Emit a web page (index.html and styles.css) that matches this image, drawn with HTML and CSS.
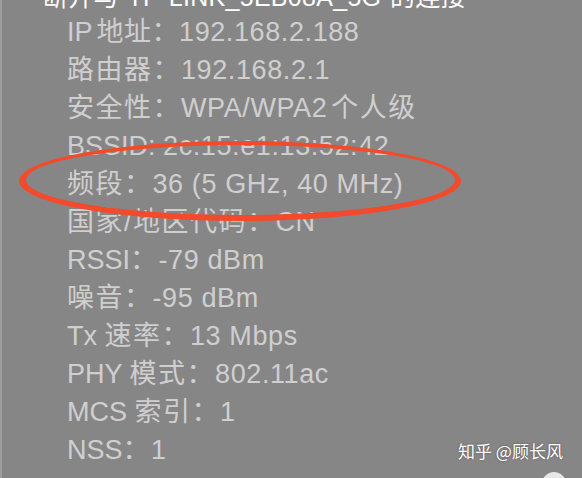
FILE: index.html
```html
<!DOCTYPE html>
<html lang="zh-CN">
<head>
  <meta charset="UTF-8" />
  <meta name="viewport" content="width=device-width, initial-scale=1.0"/>
  <title>Wi-Fi 详细信息</title>
  <link rel="stylesheet" href="styles.css">
</head>
<body>

  <!-- menu -->
  <div class="menu">
    <div class="menu-item menu-top">断开与“TP-LINK_5EB08A_5G”的连接</div>

    <ul class="info-list">
      <li class="info-row">IP<span class="k ip">地址：</span><span class="value">192.168.2.188</span></li>
      <li class="info-row"><span class="k">路由器：</span><span class="value">192.168.2.1</span></li>
      <li class="info-row"><span class="k">安全性：</span><span class="value">WPA/WPA2</span><span class="k tight">个人级</span></li>
      <li class="info-row">BSSID: <span class="value">2c:15:e1:13:52:42</span></li>
      <li class="info-row"><span class="k">频段：</span><span class="value">36 (5 GHz, 40 MHz)</span></li>
      <li class="info-row"><span class="k">国家/地区代码：</span><span class="value">CN</span></li>
      <li class="info-row">RSSI<span class="k">：</span><span class="value">-79 dBm</span></li>
      <li class="info-row"><span class="k">噪音：</span><span class="value">-95 dBm</span></li>
      <li class="info-row">Tx <span class="k">速率：</span><span class="value">13 Mbps</span></li>
      <li class="info-row">PHY <span class="k">模式：</span><span class="value">802.11ac</span></li>
      <li class="info-row">MCS <span class="k">索引：</span><span class="value">1</span></li>
      <li class="info-row">NSS<span class="k">：</span><span class="value">1</span></li>
    </ul>

    <div class="menu-item menu-bottom">打开无线诊断…</div>
    <span class="lock-dot"></span>
  </div>

  <!-- red mark -->
  <svg class="mark" width="582" height="478" viewBox="0 0 582 478">
    <path fill="#f24a2b" fill-rule="evenodd"
      d="M19 181 A221 40 0 1 0 461 181 A221 40 0 1 0 19 181 Z
         M26 180 A214.5 35 0 1 0 455 180 A214.5 35 0 1 0 26 180 Z"/>
  </svg>

  <div class="watermark">知乎 @顾长风</div>

</body>
</html>
```

FILE: styles.css
```css
* { margin: 0; padding: 0; box-sizing: border-box; }
body {
  width: 582px;
  height: 478px;
  overflow: hidden;
  background-color: #878687;
  font-family: "Liberation Sans", "Noto Sans CJK SC", sans-serif;
  position: relative;
}
.menu {
  height: 478px;
  border-left: 2px solid #9e9d9e;
  overflow: hidden;
  position: relative;
}
.menu-item {
  color: #ffffff;
  font-size: 25px;
  letter-spacing: 0.3px;
  padding-left: 41px;
  white-space: nowrap;
}
.menu-top {
  line-height: 32px;
  margin-top: -19px;
}
.menu-bottom {
  margin-top: 6px;
  line-height: 38px;
}
.info-list {
  list-style: none;
  padding-left: 65px;
}
.info-row {
  color: #d0cfd0;
  font-size: 27px;
  line-height: 38px;
  white-space: nowrap;
}
.k { letter-spacing: 1.5px; }
.k.ip { margin-left: 4px; letter-spacing: 0.5px; }
.k.tight { margin-left: 4px; }
.value { letter-spacing: 0.6px; }
.lock-dot {
  position: absolute;
  right: 16px;
  bottom: -18px;
  width: 24px;
  height: 24px;
  border-radius: 50%;
  background-color: #e8e8e8;
}
.mark {
  position: absolute;
  top: 0;
  left: 0;
}
.watermark {
  position: absolute;
  left: 458px;
  top: 440px;
  font-family: "Noto Sans CJK SC", sans-serif;
  font-size: 17px;
  line-height: 22px;
  color: #ffffff;
  text-shadow: 0 0 2px rgba(0, 0, 0, 0.45);
}
```
